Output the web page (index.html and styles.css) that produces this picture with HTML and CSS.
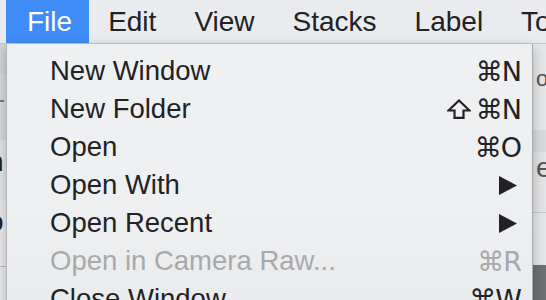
FILE: index.html
```html
<!DOCTYPE html>
<html>
<head>
<meta charset="utf-8">
<link rel="stylesheet" href="styles.css">
</head>
<body>
<div class="screen">
  <div class="menubar">
    <span class="mitem active">File</span>
    <span class="mitem">Edit</span>
    <span class="mitem">View</span>
    <span class="mitem">Stacks</span>
    <span class="mitem">Label</span>
    <span class="mitem">Tools</span>
  </div>
  <div class="window">
    <div class="left">
      <div class="lband dark"></div>
      <div class="lband mid"><span class="dash"></span></div>
      <div class="lband light"><span class="glyph">n</span></div>
      <div class="lband light2"><span class="glyph">o</span></div>
      <div class="lband bottom"></div>
    </div>
    <div class="right">
      <div class="rband r1"><span class="rglyph">o</span></div>
      <div class="rband r2"></div>
      <div class="rband r3"><span class="rglyph">e</span></div>
      <div class="rband r4"></div>
      <div class="rband r5"></div>
    </div>
  </div>
  <div class="dropdown">
    <div class="row"><span class="label">New Window</span><span class="key">⌘N</span></div>
    <div class="row"><span class="label">New Folder</span><span class="key"><svg class="shift" width="24" height="20" viewBox="0 0 24 20"><path d="M12 1.5 L22.5 11.5 H16.5 V18.8 H7.5 V11.5 H1.5 Z" fill="none" stroke="#222224" stroke-width="2.2" stroke-linejoin="miter"/></svg>⌘N</span></div>
    <div class="row"><span class="label">Open</span><span class="key">⌘O</span></div>
    <div class="row"><span class="label">Open With</span><svg class="arrow" width="18" height="19" viewBox="0 0 18 19"><path d="M0 0 L18 9.5 L0 19 Z" fill="#222224"/></svg></div>
    <div class="row"><span class="label">Open Recent</span><svg class="arrow" width="18" height="19" viewBox="0 0 18 19"><path d="M0 0 L18 9.5 L0 19 Z" fill="#222224"/></svg></div>
    <div class="row disabled"><span class="label">Open in Camera Raw...</span><span class="key">⌘R</span></div>
    <div class="row"><span class="label">Close Window</span><span class="key">⌘W</span></div>
  </div>
</div>
</body>
</html>
```
FILE: styles.css
```css
html, body {
  margin: 0;
  padding: 0;
}
body {
  width: 546px;
  height: 300px;
  overflow: hidden;
  font-family: "Liberation Sans", Arial, sans-serif;
  color: #222224;
}
.screen {
  position: relative;
  width: 546px;
  height: 300px;
  overflow: hidden;
  background: #dcdcdc;
}
.menubar {
  height: 44px;
  display: flex;
  align-items: stretch;
  background: #e9ebee;
  border-bottom: 1px solid #c4c5c8;
  box-sizing: border-box;
  padding-left: 6px;
  white-space: nowrap;
}
.mitem {
  font-size: 28px;
  line-height: 44px;
  padding: 0 19px;
  color: #222224;
}
.mitem.active {
  background: #3f8cf6;
  color: #ffffff;
  padding: 0 17px 0 21px;
}
.window {
  display: flex;
  justify-content: space-between;
  height: 256px;
}
.left {
  width: 8px;
  display: flex;
  flex-direction: column;
  overflow: hidden;
}
.lband {
  position: relative;
  overflow: hidden;
}
.lband.dark { height: 30px; background: #d3d4d6; }
.lband.mid { height: 66px; background: #d9dadc; }
.lband.light { height: 60px; background: #e4e5e7; }
.lband.light2 { height: 66px; background: #eaebed; border-bottom: 1px solid #b9babc; }
.lband.bottom { flex: 1; background: #e9eaec; }
.dash {
  position: absolute;
  left: 0;
  top: 26px;
  width: 4px;
  height: 2px;
  background: #777;
}
.glyph {
  position: absolute;
  left: -12px;
  top: 6px;
  font-size: 28px;
  color: #222;
}
.right {
  width: 14px;
  display: flex;
  flex-direction: column;
  overflow: hidden;
}
.rband { position: relative; overflow: hidden; }
.r1 { height: 86px; background: #e6e7e9; }
.r2 { height: 22px; background: #d9dadc; }
.r3 { height: 60px; background: #e3e4e6; border-bottom: 1px solid #c9cacc; }
.r4 { height: 52px; background: #e6e7e9; }
.r5 { flex: 1; background: #6f7073; }
.rglyph {
  position: absolute;
  left: 4px;
  top: 22px;
  font-size: 22px;
  color: #555;
}
.r3 .rglyph { top: 0px; font-size: 28px; }
.dropdown {
  position: absolute;
  left: 6px;
  top: 44px;
  width: 527px;
  height: 280px;
  box-sizing: border-box;
  background: linear-gradient(180deg, #eff0f2 0%, #eeeff1 60%, #e9eaec 100%);
  border-left: 1px solid #b5b6b9;
  border-right: 1px solid #a9aaad;
  padding: 8px 11px 0 43px;
  box-shadow: 0 4px 12px rgba(0,0,0,0.25);
}
.row {
  height: 38px;
  display: flex;
  align-items: center;
  justify-content: space-between;
  font-size: 27.5px;
  white-space: nowrap;
  color: #222224;
}
.key {
  display: flex;
  align-items: center;
  font-family: "DejaVu Sans", "Liberation Sans", sans-serif;
  font-size: 27px;
  letter-spacing: -1px;
}
.shift {
  margin-right: 5px;
}
.arrow {
  margin-right: 4px;
}
.disabled {
  color: #a9a9ab;
}
```
